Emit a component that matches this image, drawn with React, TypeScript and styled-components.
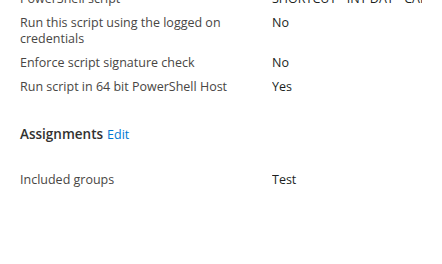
import { createGlobalStyle } from "styled-components";
import styled from "styled-components";

const GlobalStyle = createGlobalStyle`
  html, body {
    margin: 0;
    padding: 0;
    background: #ffffff;
    overflow: hidden;
  }
  body {
    font-family: "Open Sans", "Noto Sans", sans-serif;
    -webkit-font-smoothing: antialiased;
  }
`;

const Page = styled.div`
  display: flex;
  flex-direction: column;
  padding: 0 20px;
  margin-top: -9px;
`;

const PropertyList = styled.dl`
  display: grid;
  grid-template-columns: 252px 1fr;
  row-gap: 8px;
  margin: 0;
`;

const Label = styled.dt`
  margin: 0;
  padding-right: 22px;
  font-size: 12.5px;
  line-height: 16px;
  color: #484644;
`;

const Value = styled.dd`
  margin: 0;
  font-size: 12.5px;
  line-height: 16px;
  color: #201f1e;
  white-space: nowrap;
  overflow: hidden;
`;

const SectionHeader = styled.div`
  display: flex;
  align-items: baseline;
  gap: 4px;
  margin-top: 29px;
  margin-bottom: 28px;
`;

const SectionTitle = styled.h3`
  margin: 0;
  font-size: 13.5px;
  font-weight: 600;
  line-height: 20px;
  color: #323130;
`;

const EditLink = styled.a`
  font-size: 12.5px;
  color: #0078d4;
  text-decoration: none;
  cursor: pointer;
`;

interface Property {
  label: string;
  value: string;
}

const scriptSettings: Property[] = [
  { label: "PowerShell script", value: "SHORTCUT - INT DAT - CAMPUS.ps1" },
  { label: "Run this script using the logged on credentials", value: "No" },
  { label: "Enforce script signature check", value: "No" },
  { label: "Run script in 64 bit PowerShell Host", value: "Yes" },
];

const assignments: Property[] = [{ label: "Included groups", value: "Test" }];

function Properties({ items }: { items: Property[] }) {
  return (
    <PropertyList>
      {items.map((item) => (
        <>
          <Label key={item.label + "-l"}>{item.label}</Label>
          <Value key={item.label + "-v"}>{item.value}</Value>
        </>
      ))}
    </PropertyList>
  );
}

export default function App() {
  return (
    <>
      <GlobalStyle />
      <Page>
        <Properties items={scriptSettings} />
        <SectionHeader>
          <SectionTitle>Assignments</SectionTitle>
          <EditLink>Edit</EditLink>
        </SectionHeader>
        <Properties items={assignments} />
      </Page>
    </>
  );
}
